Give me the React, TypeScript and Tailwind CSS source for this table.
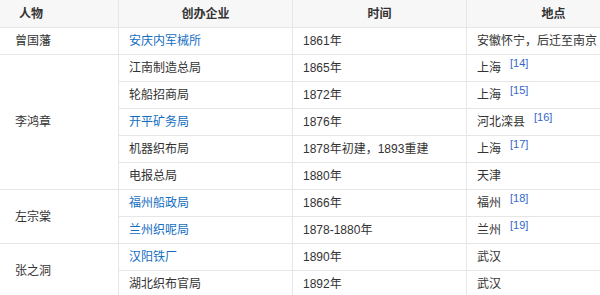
const rows = [
  { company: '江南制造总局', link: false, time: '1865年', place: '上海', ref: '14' },
  { company: '轮船招商局', link: false, time: '1872年', place: '上海', ref: '15' },
  { company: '开平矿务局', link: true, time: '1876年', place: '河北滦县', ref: '16' },
  { company: '机器织布局', link: false, time: '1878年初建，1893重建', place: '上海', ref: '17' },
  { company: '电报总局', link: false, time: '1880年', place: '天津', ref: '' },
];

const groups = [
  {
    person: '曾国藩',
    items: [{ company: '安庆内军械所', link: true, time: '1861年', place: '安徽怀宁，后迁至南京', ref: '' }],
  },
  { person: '李鸿章', items: rows },
  {
    person: '左宗棠',
    items: [
      { company: '福州船政局', link: true, time: '1866年', place: '福州', ref: '18' },
      { company: '兰州织呢局', link: true, time: '1878-1880年', place: '兰州', ref: '19' },
    ],
  },
  {
    person: '张之洞',
    items: [
      { company: '汉阳铁厂', link: true, time: '1890年', place: '武汉', ref: '' },
      { company: '湖北织布官局', link: false, time: '1892年', place: '武汉', ref: '' },
    ],
  },
];

const cell = 'h-[27px] border border-[#e6e6e6] px-[10px] py-0 align-middle whitespace-nowrap';

export default function App() {
  return (
    <div className="h-[295px] w-[600px] overflow-hidden bg-white font-['Liberation_Sans','Noto_Sans_CJK_SC',sans-serif] text-[12px] text-[#333]">
      <table className="-mt-px ml-[-57px] w-[696px] table-fixed border-collapse">
        <colgroup>
          <col className="w-[175px]" />
          <col className="w-[174px]" />
          <col className="w-[174px]" />
          <col className="w-[174px]" />
        </colgroup>
        <thead>
          <tr className="bg-[#f7f7f7]">
            <th className={`${cell} h-[28px] text-center font-bold`}>人物</th>
            <th className={`${cell} h-[28px] text-center font-bold`}>创办企业</th>
            <th className={`${cell} h-[28px] text-center font-bold`}>时间</th>
            <th className={`${cell} h-[28px] text-center font-bold`}>地点</th>
          </tr>
        </thead>
        <tbody>
          {groups.map((g) =>
            g.items.map((it, i) => (
              <tr key={it.company}>
                {i === 0 && (
                  <td rowSpan={g.items.length} className={`${cell} pl-[71px]`}>
                    {g.person}
                  </td>
                )}
                <td className={cell}>
                  <span className={it.link ? 'text-[#136ec2]' : ''}>{it.company}</span>
                </td>
                <td className={cell}>{it.time}</td>
                <td className={cell}>
                  {it.place}
                  {it.ref && (
                    <sup className="relative top-[-5px] ml-[9px] text-[11px] text-[#3366cc]">[{it.ref}]</sup>
                  )}
                </td>
              </tr>
            )),
          )}
        </tbody>
      </table>
    </div>
  );
}
